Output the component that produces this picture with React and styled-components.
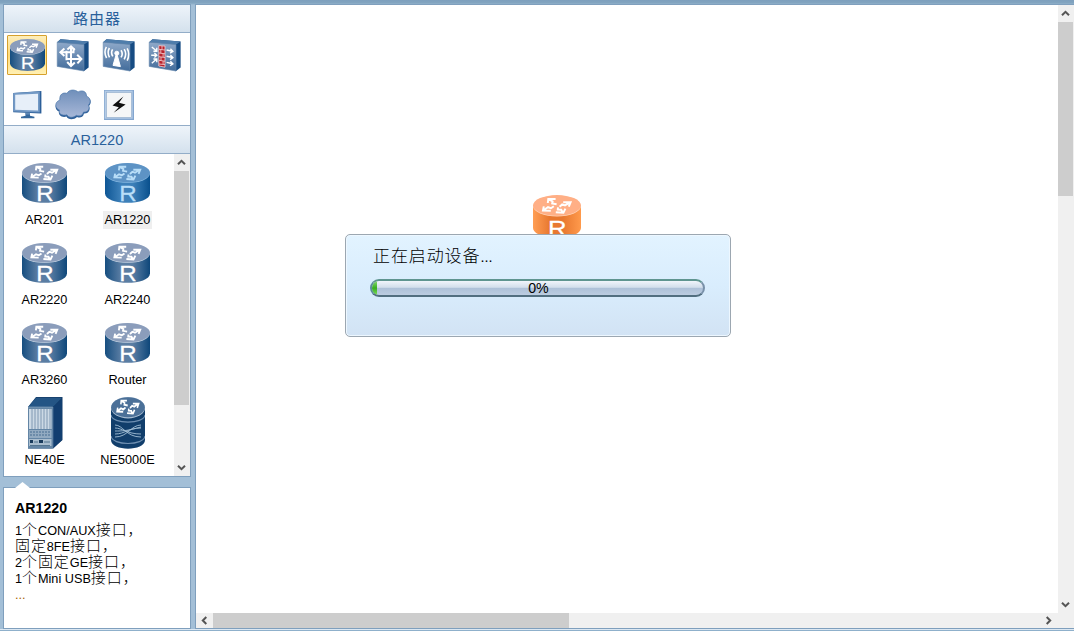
import React from "react";
import styled, { createGlobalStyle, css } from "styled-components";

const LINE = "#7f9fbd";

const Global = createGlobalStyle`
  * { box-sizing: border-box; }
  html, body { margin: 0; padding: 0; }
  body {
    font-family: "Liberation Sans", "Noto Sans CJK SC", sans-serif;
    overflow: hidden;
    color: #000;
  }
`;

const Window = styled.div`
  width: 1074px;
  height: 631px;
  display: flex;
  gap: 4px;
  padding: 4px 0 2px 3px;
  background: linear-gradient(#7d9fbd 0, #82a5c0 3px, #a3bfd7 5px, #a3bfd7 629px, #dce8f3 629px, #dce8f3 630px, #8fb0cb 630px);
`;

const Sidebar = styled.aside`
  width: 188px;
  flex: none;
  display: flex;
  flex-direction: column;
  gap: 10px;
`;

const Panel = styled.section`
  border: 1px solid ${LINE};
  background: #fff;
  height: 473px;
  display: flex;
  flex-direction: column;
`;

const Heading = styled.h2`
  margin: 0;
  height: ${(p) => p.$height}px;
  flex: none;
  display: flex;
  align-items: center;
  justify-content: center;
  border-bottom: 1px solid #93adc8;
  border-top: ${(p) => (p.$ruled ? "1px solid #93adc8" : "0")};
  background: linear-gradient(#eef4fa, #d4e1ed);
  color: #29609b;
  font-size: ${(p) => p.$size}px;
  font-weight: 400;
`;

const HeadingHan = styled.span`
  font-family: "Noto Sans CJK SC", sans-serif;
  line-height: 20px;
  letter-spacing: 1px;
  margin-top: -2px;
`;

const CategoryGrid = styled.nav`
  height: 92px;
  flex: none;
  display: grid;
  grid-template-columns: repeat(4, 40px);
  grid-auto-rows: 40px;
  gap: 10px 6px;
  padding: 2px 3px 0;
`;

const Category = styled.button`
  appearance: none;
  margin: 0;
  padding: 0;
  display: flex;
  align-items: center;
  justify-content: center;
  border: 1px solid transparent;
  border-radius: 1px;
  background: none;
  ${(p) =>
    p.$active &&
    css`
      border-color: #d6a12c;
      background: linear-gradient(#fdeebb, #ffdc7a 50%, #fff0b4);
    `}
  svg { display: block; }
`;

const DeviceArea = styled.div`
  flex: 1;
  min-height: 0;
  display: flex;
`;

const DeviceGrid = styled.div`
  flex: 1;
  display: grid;
  grid-template-columns: 83px 83px;
  grid-auto-rows: 80px;
  overflow: hidden;
`;

const Device = styled.div`
  display: flex;
  flex-direction: column;
  align-items: center;
  padding-right: 2px;
`;

const DeviceArt = styled.div`
  height: 57px;
  display: flex;
  align-items: center;
  justify-content: center;
  svg { display: block; }
`;

const DeviceLabel = styled.span`
  padding: 1px 2px 0;
  height: 18px;
  line-height: 17px;
  font-size: 12.7px;
  white-space: nowrap;
  background: ${(p) => (p.$active ? "#efefef" : "transparent")};
`;

const Scroll = styled.div`
  display: flex;
  flex: none;
  flex-direction: ${(p) => (p.$horizontal ? "row" : "column")};
  justify-content: space-between;
  background: #f0f0f0;
  ${(p) => (p.$horizontal ? "height: 15px;" : "width: 16px;")}
`;

const ScrollArrow = styled.span`
  width: ${(p) => (p.$horizontal ? 17 : 15)}px;
  height: ${(p) => (p.$horizontal ? 15 : 17)}px;
  display: flex;
  align-items: center;
  justify-content: center;
  svg { transform: rotate(${(p) => p.$turn}deg); }
`;

const Track = styled.div`
  flex: 1;
`;

const Thumb = styled.div`
  background: #cdcdcd;
  ${(p) =>
    p.$horizontal
      ? `width: ${p.$length}px; height: 15px;`
      : `height: ${p.$length}px; width: 15px;`}
`;

const Info = styled.section`
  position: relative;
  height: 142px;
  border: 1px solid ${LINE};
  background: #fff;
  padding: 11px 11px;
`;

const Pointer = styled.svg`
  position: absolute;
  left: 11px;
  top: -6px;
`;

const InfoTitle = styled.h3`
  margin: 0 0 4px;
  font-size: 14.2px;
  line-height: 18px;
  font-weight: 700;
`;

const InfoLine = styled.p`
  margin: 0;
  height: 16px;
  line-height: 16px;
  font-size: 12.7px;
  white-space: nowrap;
  ${(p) => p.$muted && "padding-top: 2px; color: #a86400;"}
`;

const Han = styled.span`
  font-family: "Noto Sans CJK SC", sans-serif;
  font-size: 15px;
  letter-spacing: 0.9px;
  font-weight: 300;
  line-height: 16px;
`;

const Workspace = styled.main`
  flex: 1;
  position: relative;
  border: 1px solid ${LINE};
  border-right: 0;
  background: #fff;
  display: flex;
  flex-direction: column;
`;

const WorkRow = styled.div`
  flex: 1;
  min-height: 0;
  display: flex;
`;

const Topology = styled.div`
  flex: 1;
`;

const BottomRow = styled.div`
  display: flex;
  background: #f0f0f0;
`;

const HScrollHolder = styled.div`
  width: 861px;
`;

const Node = styled.div`
  position: absolute;
  left: 337px;
  top: 190px;
`;

const Dialog = styled.div`
  position: absolute;
  left: 149px;
  top: 229px;
  width: 386px;
  height: 103px;
  padding: 7px 25px 0 24px;
  border: 1px solid #9ca7b1;
  border-radius: 5px;
  background: linear-gradient(#e2f3ff, #d9edfd 50%, #d2e3f4);
  box-shadow: inset 0 0 0 1px #edf7ff;
`;

const DialogText = styled.div`
  display: flex;
  align-items: baseline;
  height: 26px;
  line-height: 26px;
  margin-left: 3px;
  font-size: 14.5px;
`;

const DialogHan = styled.span`
  font-family: "Noto Sans CJK SC", sans-serif;
  font-size: 17px;
  letter-spacing: 0.9px;
  font-weight: 300;
`;

const Bar = styled.div`
  position: relative;
  height: 18px;
  margin-top: 11px;
  border: 2px solid;
  border-color: #5f9590 #7890a9 #526f80 #5b8d99;
  border-radius: 9px;
  overflow: hidden;
  display: flex;
  align-items: center;
  justify-content: center;
  padding-left: 2px;
  background: linear-gradient(#f0f5fb, #d3dfec 45%, #aec1d8 52%, #bccde1);
  font-size: 14.2px;
  line-height: 14px;
`;

const BarFill = styled.div`
  position: absolute;
  left: 0;
  top: 0;
  bottom: 0;
  width: 5px;
  background: linear-gradient(#86d873, #36ae20 50%, #7cdc58);
`;

const BarLabel = styled.span`
  position: relative;
`;

const Chevron = () => (
  <svg width="9" height="7" viewBox="0 0 9 7">
    <path d="M1 5.3 4.5 1.8 8 5.3" fill="none" stroke="#555" strokeWidth="2" />
  </svg>
);

function ScrollBar({ horizontal, length }) {
  return (
    <Scroll $horizontal={horizontal}>
      <ScrollArrow $horizontal={horizontal} $turn={horizontal ? -90 : 0}><Chevron /></ScrollArrow>
      <Track><Thumb $horizontal={horizontal} $length={length} /></Track>
      <ScrollArrow $horizontal={horizontal} $turn={horizontal ? 90 : 180}><Chevron /></ScrollArrow>
    </Scroll>
  );
}

const PALETTES = {
  navy: { top: "#8b9dbb", edge: "#164e80", mid: "#5a7da3", dark: "#0e477a", rim: "#b5c6d9", ink: "#fff" },
  blue: { top: "#5d93c5", edge: "#0e5695", mid: "#3d80b9", dark: "#09508d", rim: "#7eb2dc", ink: "#b9def8" },
  orange: { top: "#ffaf86", edge: "#ff9e54", mid: "#e87830", dark: "#ff9a4c", rim: "#ffd3b6", ink: "#fff" },
};

const CrossArrows = ({ color, transform }) => (
  <g transform={transform} stroke={color} fill="none" strokeWidth="2" strokeLinejoin="miter">
    <path d="M14.8 8.2L15.3 4.2L22.6 4.2M16 4.6L19.6 6.6L19.2 8.6L23.6 9.4" />
    <path d="M30.2 7.4L37.6 7.4L35.8 11.8M36.6 7.8L32 10.6L29.2 9.6L26.6 12" />
    <path d="M10.8 11.6L10 15.7L17.8 15.9M10.8 15.2L15 12.4L18 13.4L20.8 11.4" />
    <path d="M22.8 17.4L30.4 17.9L32.4 13.8M29.6 17.4L28.2 15L24.8 14.8L25 12.6" />
  </g>
);

function Router({ palette = "navy", width = 45, height = 40 }) {
  const c = PALETTES[palette];
  const id = `body-${palette}-${width}`;
  return (
    <svg width={width} height={height} viewBox="0 0 48 43" preserveAspectRatio="none" overflow="visible">
      <defs>
        <linearGradient id={id}>
          <stop offset="0" stopColor={c.edge} />
          <stop offset=".35" stopColor={c.mid} />
          <stop offset=".62" stopColor={c.mid} />
          <stop offset="1" stopColor={c.dark} />
        </linearGradient>
      </defs>
      <path d="M0 10.5V32.5C0 46.3 48 46.3 48 32.5V10.5Z" fill={`url(#${id})`} />
      <ellipse cx="24" cy="11" rx="24" ry="10.6" fill={c.rim} />
      <ellipse cx="24" cy="10.4" rx="23.9" ry="10.3" fill={c.top} />
      <CrossArrows color={c.ink} transform="translate(0 -.2)" />
      <text transform="translate(24.4 40.6) scale(1.12 1)" textAnchor="middle" fontFamily="Liberation Sans" fontSize="23" fill={c.ink} stroke={c.ink} strokeWidth=".3">R</text>
    </svg>
  );
}

function Slab({ children }) {
  return (
    <svg width="34" height="34" viewBox="0 0 34 34">
      <defs>
        <linearGradient id="slab-face" x2="0" y2="1">
          <stop offset="0" stopColor="#8fa9c9" />
          <stop offset="1" stopColor="#426c9b" />
        </linearGradient>
      </defs>
      <path d="M1.2 4.2L4.5 1.3 32.6 3.5V29.5L27.8 33.2Z" fill="#174c83" />
      <path d="M1.2 4.2L4.5 1.3 32.6 3.5 28 6.6Z" fill="#4f7dab" />
      <path d="M1.2 4.2L28 6.6V33L1.2 28.4Z" fill="url(#slab-face)" stroke="#6788ad" strokeWidth=".6" />
      <g fill="none" stroke="#fff">{children}</g>
    </svg>
  );
}

const SwitchIcon = () => (
  <Slab>
    <g strokeWidth="2">
      <path d="M10.5 22.2V12.8M15 9.5V27M4.5 14.2H17.5V10M10.5 21H25" />
      <path d="M8.4 10.6L4.4 14.2L8.4 18M11.4 11.6L15 8.3L18.8 12M21.2 16.8L25.4 21L21.4 25.4M11.2 24L15 28L18.8 24.4" />
    </g>
  </Slab>
);

const WirelessIcon = () => (
  <Slab>
    <path d="M14.6 15L11 27.4L18.4 28.6Z" fill="#fff" />
    <circle cx="14.8" cy="15.2" r="2" fill="#fff" />
    <path strokeWidth="1.6" d="M10.6 11.4Q8.5 14.6 10.8 18.4M7.4 10Q4.8 14.4 7.5 19.4M4.4 8.8Q1.4 14 4.6 20M19 12.2Q21.4 15.8 19 19.4M22.2 11.2Q25.2 16 22.2 21.3M25.2 10.4Q28.2 16.4 25.2 22.6" />
  </Slab>
);

const FirewallIcon = () => (
  <Slab>
    <path d="M10.8 7.6L17 8.1V29.2L10.8 28Z" fill="#b8222b" stroke="none" />
    <path strokeWidth=".8" stroke="#f4d6d8" d="M10.8 7.6L17 8.1V29.2L10.8 28ZM11 11.3L17 12M11 15L17 15.8M11 18.7L17 19.5M11 22.3L17 23.2M11 26L17 26.6M14 8V11.5M12.8 11.5V15.2M15.1 15.5V19.2M13 19V22.5M15.1 23V26.3" />
    <path strokeWidth="1.4" d="M3.8 9L8.6 13M8.8 9.8V13.2H5.4M3.2 17.2H8.6M6.4 14.9L8.8 17.2L6.4 19.5M3.8 25.3L8.6 21M5.4 21H8.8V24.3M18.6 12L24.6 13.2M22.4 10.7L24.9 13.3L22.1 15.2M18.6 18.2L24.6 19.5M22.4 17.1L24.9 19.6L22.1 21.6M18.6 24.4L24.6 25.7M22.4 23.3L24.9 25.8L22.1 27.8" />
  </Slab>
);

const MonitorIcon = () => (
  <svg width="30" height="30" viewBox="0 0 30 30">
    <path d="M1.2 3L29.4 1V23.4L1.2 22.2Z" fill="#2c5f99" />
    <path d="M1.2 3L27.8 1.4V22.6L1.2 21.6Z" fill="#7399c5" />
    <path d="M3.2 4.8L26 3.8V20.6L3.2 19.8Z" fill="#e7eff9" />
    <path d="M13.5 22.6H18V25.8L22.4 26.8V28.2H9V26.8L13.5 25.8Z" fill="#34679c" />
    <path d="M13.5 22.6H18V24.6H13.5Z" fill="#6088b5" />
  </svg>
);

const CloudIcon = () => (
  <svg width="38" height="32" viewBox="0 0 38 32">
    <defs>
      <linearGradient id="cloud" x2="0" y2="1">
        <stop offset="0" stopColor="#6f8fba" />
        <stop offset="1" stopColor="#a8b8d8" />
      </linearGradient>
    </defs>
    <path d="M6 12C5 6 9 3.5 13 5C15 .5 21 .5 24 3.5C28 1 33 3 32.5 8C37 9 38 14 35 17C37 21 34 25 30 24.5C29 29 25 29 23 28C20 31 14 31 12.5 27.5C8 29 4 26 5 22.5C.5 21 0 14 6 12Z" fill="#2f609a" />
    <path d="M6 11C5 5.5 9 3 13 4.4C15 .2 21 .2 24 3C28 .5 33 2.5 32.3 7C36.4 8.5 37.5 13 34.4 16C36.5 20 33.5 23.5 29.5 23C28.5 27 25 27.5 22.5 26.3C19 29 14.5 29 13 25.8C8 27 4 24.5 5.5 21C1 19.5 0 13 6 11Z" fill="url(#cloud)" stroke="#557eaf" strokeWidth=".7" />
  </svg>
);

const BoltIcon = () => (
  <svg width="30" height="30" viewBox="0 0 30 30">
    <rect width="30" height="30" fill="#84a6cf" />
    <rect x=".7" y=".7" width="28" height="28" fill="#b3cae5" />
    <rect x="2.5" y="2.5" width="25" height="25" fill="#f5f6f7" stroke="#8ea9c8" strokeWidth=".6" />
    <path d="M19.4 6.6L8.5 15.6L14.8 17.2L9.6 22.8L21.6 14.6L15 12.8Z" fill="#111" />
  </svg>
);

const ChassisIcon = () => (
  <svg width="36" height="52" viewBox="0 0 36 52">
    <path d="M1 10L9 0H35.5V43L26 51.5H1Z" fill="#143d68" />
    <path d="M1 10L9 .8H35L26.5 9.5Z" fill="#245585" />
    <path d="M26 10L35 1.5V43L26 51.5Z" fill="#123e70" />
    <path d="M1 10H25.5V51.5H1Z" fill="#6385a5" />
    <path d="M2 12H24.5V32H2Z" fill="#ccd9e5" />
    <path d="M5 12V32M8 12V32M11 12V32M14 12V32M17 12V32M20 12V32M23 12V32" stroke="#7691ac" strokeWidth=".9" />
    <path d="M2 33H24.5V41H2Z" fill="#91aac1" />
    <path d="M3 35H24M3 38H24" stroke="#466d91" strokeDasharray="2 1" />
    <path d="M2 42H24.5V49H2Z" fill="#a9bdce" />
    <path d="M3 43H6V46H3ZM12 43H16V46H12Z" fill="#183a5b" />
    <path d="M7 45H11M17 45H23M3 48.5H23" stroke="#53748f" />
    <path d="M1 10H25.8V51.5" fill="none" stroke="#86a6c3" strokeWidth=".7" />
  </svg>
);

const CoreRouterIcon = () => (
  <svg width="34" height="52" viewBox="0 0 34 52">
    <path d="M0 10V43C0 54.5 34 54.5 34 43V10Z" fill="#113e6b" />
    <path d="M0 18C1 27.5 33 27.5 34 18M0 39C1 49 33 49 34 39" fill="none" stroke="#7090b2" strokeWidth="1.2" />
    <ellipse cx="17" cy="10.7" rx="17" ry="10.7" fill="#a6bbd0" />
    <ellipse cx="17" cy="10.2" rx="16.8" ry="10" fill="#4b7098" />
    <CrossArrows color="#fff" transform="matrix(.78 0 0 .95 -1.7 -.4)" />
    <path d="M4 28C12 28 15 40 30 40M4 31C11 31 16 37 30 37M4 34C11 34 16 34 30 30M4 37C14 37 17 31 30 31M4 40C17 40 20 28 30 28" fill="none" stroke="#a3bed5" strokeWidth=".9" />
  </svg>
);

const categories = [
  <Router key="r" width={35} height={32} />,
  <SwitchIcon key="s" />,
  <WirelessIcon key="w" />,
  <FirewallIcon key="f" />,
  <MonitorIcon key="m" />,
  <CloudIcon key="c" />,
  <BoltIcon key="b" />,
];

const devices = [
  { name: "AR201", art: <Router /> },
  { name: "AR1220", art: <Router palette="blue" />, active: true },
  { name: "AR2220", art: <Router /> },
  { name: "AR2240", art: <Router /> },
  { name: "AR3260", art: <Router /> },
  { name: "Router", art: <Router /> },
  { name: "NE40E", art: <ChassisIcon /> },
  { name: "NE5000E", art: <CoreRouterIcon /> },
];

export default function App() {
  return (
    <>
      <Global />
      <Window>
        <Sidebar>
          <Panel>
            <Heading $height={28} $size={15}><HeadingHan>路由器</HeadingHan></Heading>
            <CategoryGrid>
              {categories.map((icon, i) => (
                <Category key={i} $active={i === 0}>{icon}</Category>
              ))}
            </CategoryGrid>
            <Heading $height={29} $size={14.5} $ruled>AR1220</Heading>
            <DeviceArea>
              <DeviceGrid>
                {devices.map((d) => (
                  <Device key={d.name}>
                    <DeviceArt>{d.art}</DeviceArt>
                    <DeviceLabel $active={d.active}>{d.name}</DeviceLabel>
                  </Device>
                ))}
              </DeviceGrid>
              <ScrollBar length={234} />
            </DeviceArea>
          </Panel>
          <Info>
            <Pointer width="16" height="7" viewBox="0 0 16 7">
              <path d="M0 7V6L7.5 0L15 6V7Z" fill="#fff" />
            </Pointer>
            <InfoTitle>AR1220</InfoTitle>
            <InfoLine>1<Han>个</Han>CON/AUX<Han>接口，</Han></InfoLine>
            <InfoLine><Han>固定</Han>8FE<Han>接口，</Han></InfoLine>
            <InfoLine>2<Han>个固定</Han>GE<Han>接口，</Han></InfoLine>
            <InfoLine>1<Han>个</Han>Mini USB<Han>接口，</Han></InfoLine>
            <InfoLine $muted>...</InfoLine>
          </Info>
        </Sidebar>
        <Workspace>
          <WorkRow>
            <Topology />
            <ScrollBar length={174} />
          </WorkRow>
          <BottomRow>
            <HScrollHolder><ScrollBar horizontal length={356} /></HScrollHolder>
          </BottomRow>
          <Node><Router palette="orange" width={48} height={43} /></Node>
          <Dialog>
            <DialogText><DialogHan>正在启动设备</DialogHan>...</DialogText>
            <Bar>
              <BarFill />
              <BarLabel>0%</BarLabel>
            </Bar>
          </Dialog>
        </Workspace>
      </Window>
    </>
  );
}
